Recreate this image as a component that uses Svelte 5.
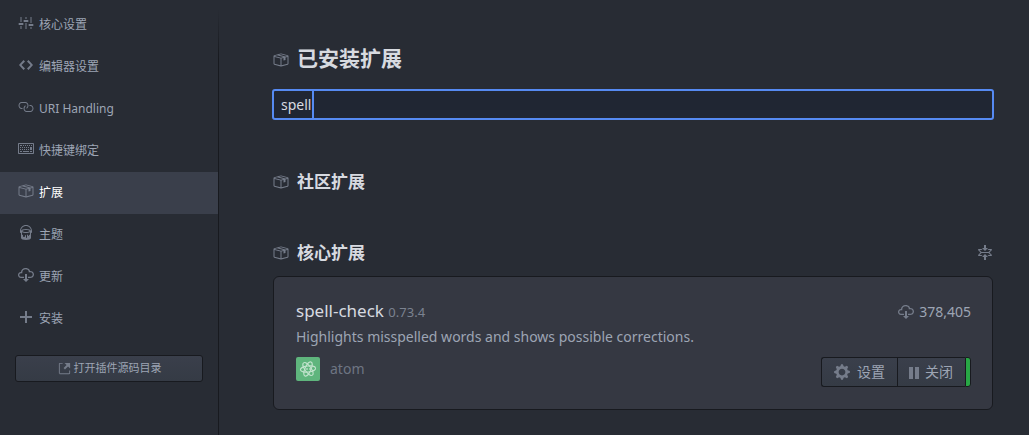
<script>
  // Each entry: left edge of the view box, then the path on a 16-unit grid.
  const icons = {
    settings: [0.5, 'M4 7H3V2h1v5zm-1 7h1v-3H3v3zm5 0h1V8H8v6zm5 0h1v-2h-1v2zm1-12h-1v6h1V2zM9 2H8v2h1V2zM5 8H2c-.55 0-1 .45-1 1s.45 1 1 1h3c.55 0 1-.45 1-1s-.45-1-1-1zm5-3H7c-.55 0-1 .45-1 1s.45 1 1 1h3c.55 0 1-.45 1-1s-.45-1-1-1zm5 4h-3c-.55 0-1 .45-1 1s.45 1 1 1h3c.55 0 1-.45 1-1s-.45-1-1-1z'],
    code: [-1, 'M9.5 3L8 4.5 11.5 8 8 11.5 9.5 13 14 8 9.5 3zm-5 0L0 8l4.5 5L6 11.5 2.5 8 6 4.5 4.5 3z'],
    link: [0.5, 'M4 9h1v1H4c-1.5 0-3-1.69-3-3.5S2.55 3 4 3h4c1.45 0 3 1.69 3 3.5 0 1.41-.91 2.72-2 3.25V8.59c.58-.45 1-1.27 1-2.09C10 5.22 8.98 4 8 4H4c-.98 0-2 1.22-2 2.5S3 9 4 9zm9-3h-1v1h1c1 0 2 1.22 2 2.5S13.98 12 13 12H9c-.98 0-2-1.22-2-2.5 0-.83.42-1.64 1-2.09V6.25c-1.09.53-2 1.84-2 3.25C6 11.31 7.55 13 9 13h4c1.45 0 3-1.69 3-3.5S14.5 6 13 6z'],
    keyboard: [0, 'M10 5H9V4h1v1zM3 6H2v1h1V6zm5-2H7v1h1V4zM4 4H2v1h2V4zm8 7h2v-1h-2v1zM8 7h1V6H8v1zm-4 3H2v1h2v-1zm8-6h-1v1h1V4zm2 0h-1v1h1V4zm-2 5h2V6h-2v3zm4-6v9c0 .55-.45 1-1 1H1c-.55 0-1-.45-1-1V3c0-.55.45-1 1-1h14c.55 0 1 .45 1 1zm-1 0H1v9h14V3zM6 7h1V6H6v1zm0-3H5v1h1V4zM4 7h1V6H4v1zm1 4h6v-1H5v1zm5-4h1V6h-1v1zM3 8H2v1h1V8zm5 0v1h1V8H8zM6 8v1h1V8H6zM5 8H4v1h1V8zm5 1h1V8h-1v1z'],
    package: [0.5, 'M1 4.27v7.47c0 .45.3.84.75.97l6.5 1.73c.16.05.34.05.5 0l6.5-1.73c.45-.13.75-.52.75-.97V4.27c0-.45-.3-.84-.75-.97l-6.5-1.74a1.4 1.4 0 0 0-.5 0L1.75 3.3c-.45.13-.75.52-.75.97zm7 9.09l-6-1.59V5l6 1.61v6.75zM2 4l2.5-.67L11 5.06l-2.5.67L2 4zm13 7.77l-6 1.59V6.61l2-.55V8.5l2-.53V5.53L15 5v6.77zm-2-7.24L6.5 2.8l2-.53L15 4l-2 .53z'],
    paintcan: [-2, 'M6 0C2.69 0 0 2.69 0 6v1c0 .55.45 1 1 1v5c0 1.1 2.24 2 5 2s5-.9 5-2V8c.55 0 1-.45 1-1V6c0-3.31-2.69-6-6-6zm3 10v.5c0 .28-.22.5-.5.5s-.5-.22-.5-.5V10c0-.28-.22-.5-.5-.5s-.5.22-.5.5v2.5c0 .28-.22.5-.5.5s-.5-.22-.5-.5v-2c0-.28-.22-.5-.5-.5s-.5.22-.5.5v.5c0 .55-.45 1-1 1s-1-.45-1-1v-1c-.55 0-1-.45-1-1V7.2c.91.49 2.36.8 4 .8s3.09-.31 4-.8V9c0 .55-.45 1-1 1zM6 7c-1.68 0-3.12-.41-3.71-1C2.88 5.41 4.32 5 6 5s3.12.41 3.71 1c-.59.59-2.03 1-3.71 1zm0-3C3.24 4 1 4.89 1 6c0-2.76 2.24-5 5-5s5 2.24 5 5c0-1.1-2.24-2-5-2z'],
    cloud: [0, 'M9 12h2l-3 3-3-3h2V7h2v5zm3-8c0-.44-.91-3-4.5-3C5.08 1 3 2.92 3 5 1.02 5 0 6.52 0 8c0 1.53 1 3 3 3h3V9.7H3C1.38 9.7 1.3 8.28 1.3 8c0-.17.05-1.7 1.7-1.7h1.3V5c0-1.39 1.56-2.7 3.2-2.7 2.55 0 3.13 1.55 3.2 1.8v1.2H12c.81 0 2.7.22 2.7 2.2 0 2.09-2.25 2.2-2.7 2.2h-2V11h2c2.08 0 4-1.16 4-3.5C16 5.06 14.08 4 12 4z'],
    plus: [-2, 'M12 9H7v5H5V9H0V7h5V2h2v5h5v2z'],
    external: [-2, 'M11 10h1v3c0 .55-.45 1-1 1H1c-.55 0-1-.45-1-1V3c0-.55.45-1 1-1h3v1H1v10h10v-3zM6 2l2.25 2.25L5 7.5 6.5 9l3.25-3.25L12 8V2H6z'],
    gear: [-1, 'M14 8.77v-1.6l-1.94-.64-.45-1.09.88-1.84-1.13-1.13-1.81.91-1.09-.45-.69-1.92h-1.6l-.63 1.94-1.11.45-1.84-.88-1.13 1.13.91 1.81-.45 1.09L0 7.23v1.59l1.94.64.45 1.09-.88 1.84 1.13 1.13 1.81-.91 1.09.45.69 1.92h1.59l.63-1.94 1.11-.45 1.84.88 1.13-1.13-.92-1.81.47-1.09L14 8.75v.02zM7 11c-1.66 0-3-1.34-3-3s1.34-3 3-3 3 1.34 3 3-1.34 3-3 3z'],
    pause: [0, 'M0 3h4v12H0V3zm6 0h4v12H6V3z'],
    fold: [-1, 'M7 9l3 3H8v3H6v-3H4l3-3zm3-6H8V0H6v3H4l3 3 3-3zm4 2c0-.55-.45-1-1-1h-2.5l-1 1h3l-2 2h-7l-2-2h3l-1-1H1c-.55 0-1 .45-1 1l2.5 2.5L0 10c0 .55.45 1 1 1h2.5l1-1h-3l2-2h7l2 2h-3l1 1H13c.55 0 1-.45 1-1l-2.5-2.5L14 5z']
  };

  const menu = [
    ['settings', '核心设置'],
    ['code', '编辑器设置'],
    ['link', 'URI Handling'],
    ['keyboard', '快捷键绑定'],
    ['package', '扩展'],
    ['paintcan', '主题'],
    ['cloud', '更新'],
    ['plus', '安装']
  ];

  let active = $state('package');
  let query = $state('spell');
</script>

{#snippet icon(name, size = 16, span = 16)}
  <svg class="icon" width={size * span / 16} height={size} viewBox="{icons[name][0]} 0 {span} 16" aria-hidden="true">
    <path d={icons[name][1]} />
  </svg>
{/snippet}

<div class="settings-view">
  <nav>
    <ul>
      {#each menu as [name, label]}
        <li>
          <button class="item" class:active={active === name} onclick={() => (active = name)}>
            {@render icon(name)}<span>{label}</span>
          </button>
        </li>
      {/each}
    </ul>
    <button class="btn open">{@render icon('external', 15)}<span>打开插件源码目录</span></button>
  </nav>

  <main>
    <h1><label for="filter">{@render icon('package')}<span>已安装扩展</span></label></h1>
    <div class="editor">
      <input id="filter" type="text" bind:value={query} />
      <span class="cursor" aria-hidden="true"><span class="typed">{query}</span></span>
    </div>

    <h2>{@render icon('package')}<span>社区扩展</span></h2>
    <h2 class="core">
      {@render icon('package')}<span>核心扩展</span>
      <button class="fold" aria-label="折叠">{@render icon('fold')}</button>
    </h2>

    <article>
      <header>
        <h3>spell-check <small>0.73.4</small></h3>
        <span class="downloads">{@render icon('cloud')}<span>378,405</span></span>
      </header>
      <p>Highlights misspelled words and shows possible corrections.</p>
      <footer>
        <a class="author" href="#atom">
          <svg class="avatar" width="24" height="24" viewBox="0 0 24 24" aria-hidden="true">
            <rect width="24" height="24" rx="2" />
            <g>
              <ellipse cx="12" cy="12" rx="7.6" ry="3" transform="rotate(-6 12 12)" />
              <ellipse cx="12" cy="12" rx="7.6" ry="3" transform="rotate(54 12 12)" />
              <ellipse cx="12" cy="12" rx="7.6" ry="3" transform="rotate(114 12 12)" />
            </g>
            <circle cx="11" cy="12" r=".8" />
            <circle cx="14" cy="12" r=".8" />
          </svg>
          <span>atom</span>
        </a>
        <div class="group">
          <button class="btn">{@render icon('gear', 18)}<span>设置</span></button>
          <button class="btn">{@render icon('pause', 16, 10)}<span>关闭</span></button>
          <span class="status"></span>
        </div>
      </footer>
    </article>
  </main>
</div>

<style>
  :global(body) {
    margin: 0;
    background: #282c34;
  }
  .settings-view {
    display: flex;
    box-sizing: border-box;
    min-height: 100vh;
    border-bottom: 1px solid #181a1f;
    background: #282c34;
    color: #9da5b4;
    font: 12px/20px "Noto Sans", "Noto Sans CJK SC", sans-serif;
  }
  button,
  input {
    font: inherit;
    color: inherit;
  }
  .icon {
    flex: none;
    fill: #757c8a;
  }
  nav {
    flex: none;
    width: 218px;
    border-right: 1px solid;
    border-image: linear-gradient(#282c34 10px, #181a1f 60px) 1;
  }
  ul {
    margin: 0;
    padding: 4px 0 0;
    list-style: none;
  }
  .item {
    display: flex;
    align-items: center;
    gap: 5px;
    width: 100%;
    height: 42px;
    padding: 0 18px;
    border: 0;
    background: none;
  }
  .item :global(.icon) {
    margin-bottom: 4px;
  }
  .active {
    background: #3a3f4b;
    color: #fff;
  }
  .btn {
    display: flex;
    align-items: center;
    justify-content: center;
    border: 1px solid #181a1f;
    background: linear-gradient(#3a3f4b, #353b45);
  }
  .open {
    gap: 2px;
    width: calc(100% - 30px);
    height: 27px;
    margin: 15px;
    padding: 0 6px 2px;
    border-radius: 3px;
    font-size: 11px;
  }
  .open :global(.icon) {
    margin-top: 2px;
  }
  main {
    flex: 1;
    min-width: 0;
    padding: 42px 36px 25px 54px;
  }
  h1,
  h2,
  h3,
  p {
    margin: 0;
  }
  h1,
  h2 {
    color: #d7dae0;
    font-weight: 700;
  }
  h1 {
    font-size: 21px;
    line-height: 32px;
  }
  h1 label,
  h2 {
    display: flex;
    align-items: center;
    gap: 8px;
  }
  h1 :global(.icon) {
    margin-top: 4px;
  }
  h2 {
    margin-top: 50px;
    font-size: 17px;
    line-height: 24px;
  }
  h2.core {
    margin: 47px 0 11px;
  }
  .fold {
    display: flex;
    margin-left: auto;
    padding: 0;
    border: 0;
    background: none;
  }
  .editor {
    position: relative;
    margin: 15px -1px 0;
    font-size: 14px;
    line-height: 26px;
  }
  input {
    display: block;
    box-sizing: border-box;
    width: 100%;
    height: 31px;
    padding: 0 7px;
    border: 2px solid #568af2;
    border-radius: 3px;
    outline: 0;
    background: #202633;
    color: #d7dae0;
  }
  .cursor {
    position: absolute;
    inset: 0 auto 0 10px;
    border-right: 2px solid #568af2;
    pointer-events: none;
  }
  .typed {
    visibility: hidden;
  }
  article {
    padding: 21px 21px 22px 22px;
    border: 1px solid #181a1f;
    border-radius: 6px;
    background: #353842;
    font-size: 14px;
  }
  header,
  footer,
  .author,
  .downloads,
  .group {
    display: flex;
    align-items: center;
  }
  header,
  footer {
    justify-content: space-between;
  }
  h3 {
    color: #d7dae0;
    font-size: 17px;
    line-height: 25px;
    font-weight: 400;
  }
  small {
    color: #7b8290;
    font-size: 13px;
  }
  .downloads {
    gap: 5px;
  }
  p {
    line-height: 24px;
  }
  footer {
    align-items: flex-start;
    margin-top: 8px;
  }
  .author {
    gap: 10px;
    color: #6e7582;
    text-decoration: none;
  }
  .avatar rect {
    fill: #5fb57d;
  }
  .avatar g {
    fill: none;
    stroke: #c3e4ce;
  }
  .avatar circle {
    fill: #e4f3e9;
  }
  .group .btn {
    gap: 6px;
    height: 30px;
    padding: 0 12px 0 11px;
    border-right: 0;
  }
  .group .btn:first-child {
    border-radius: 3px 0 0 3px;
  }
  .status {
    box-sizing: border-box;
    width: 6px;
    height: 30px;
    border: 1px solid #181a1f;
    border-radius: 0 3px 3px 0;
    background: #28a745;
  }
</style>
